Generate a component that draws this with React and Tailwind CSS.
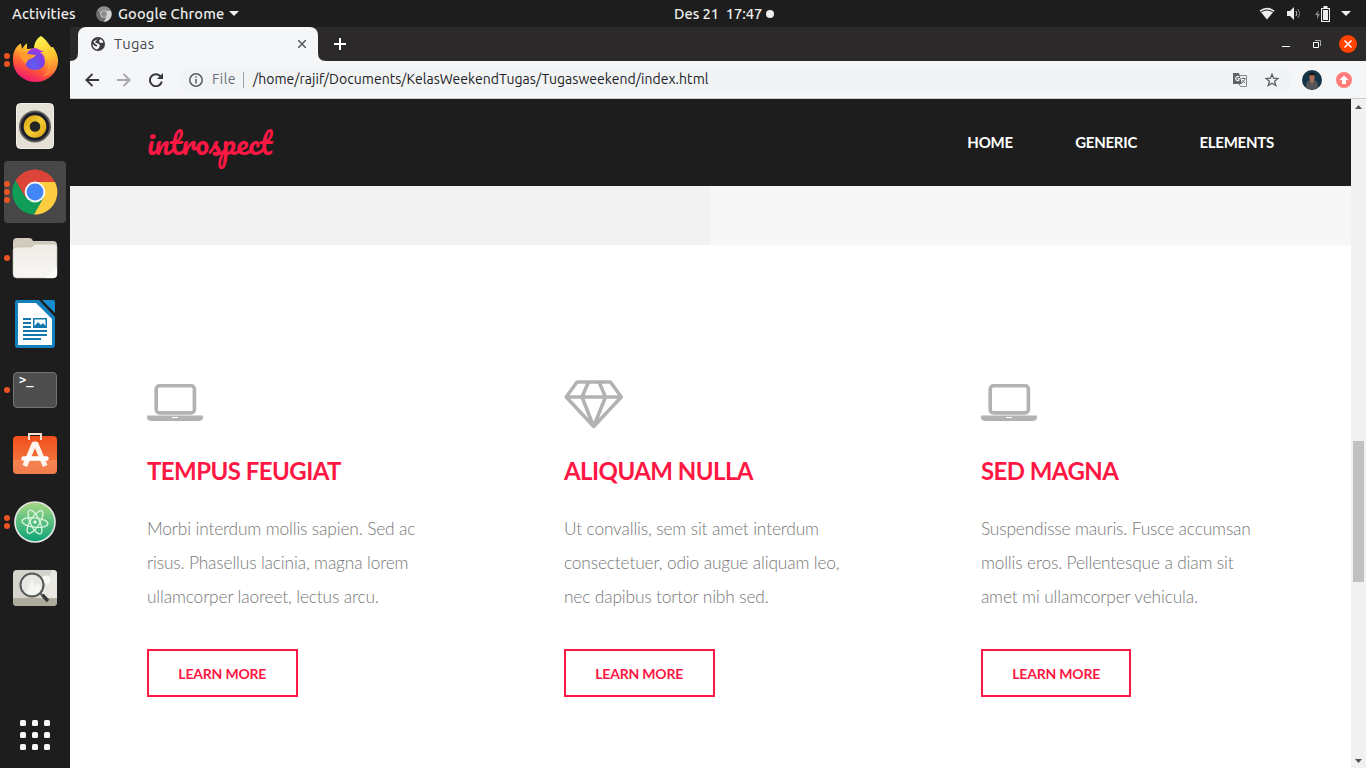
import React from 'react';

const UI = "font-['Ubuntu','Noto_Sans','Open_Sans',sans-serif]";

function Firefox() {
  return (
    <svg className="mb-[3px]" width="46" height="48" viewBox="0 0 46 48">
      <defs>
        <linearGradient id="ffBody" x1="0.8" y1="0" x2="0.3" y2="1">
          <stop offset="0" stopColor="#fff04a" />
          <stop offset="0.35" stopColor="#ffb52c" />
          <stop offset="0.65" stopColor="#ff5b36" />
          <stop offset="1" stopColor="#ee1179" />
        </linearGradient>
        <linearGradient id="ffTail" x1="0.3" y1="0" x2="0.6" y2="1">
          <stop offset="0" stopColor="#fff550" />
          <stop offset="0.6" stopColor="#ffc02f" />
          <stop offset="1" stopColor="#ff7139" />
        </linearGradient>
        <radialGradient id="ffGlobe" cx="0.4" cy="0.75" r="0.8">
          <stop offset="0" stopColor="#5f5ff0" />
          <stop offset="0.6" stopColor="#7542e5" />
          <stop offset="1" stopColor="#b833e1" />
        </radialGradient>
      </defs>
      <path d="M1 23C1 17 4 11 9 8.500L10 14C12 11 13 9.500 15 8.500V14C21 13 24 13 28 16L41 12C44 16 46 21 46 26A22.500 21 0 0 1 1 26Z" fill="url(#ffBody)" />
      <path d="M29 1C35 5 36 9 40 13C44 17 46 22 45 29C43 37 37 41 31 41C37 36 38 29 35 22C31 15 24 16 22 14C22 8 25 3 29 1Z" fill="url(#ffTail)" />
      <path d="M14 25C14 17 18 13 24 13L32 17C30 17 29 17 28 17C34 21 34 29 31 32C27 36 19 36 15 32C13 30 13 27 14 25Z" fill="url(#ffGlobe)" />
      <path d="M7 20C11 18 14 18 16 19L24 20C22 23 20 23 18 24C15 25 15 27 14 29C11 27 10 23 7 20Z" fill="#ff9a2e" />
    </svg>
  );
}

function Speaker() {
  return (
    <svg width="38" height="46" viewBox="0 0 38 46">
      <defs>
        <linearGradient id="cone" x1="0" y1="0" x2="1" y2="1">
          <stop offset="0" stopColor="#d79a10" />
          <stop offset="0.5" stopColor="#f5cf35" />
          <stop offset="1" stopColor="#d79a10" />
        </linearGradient>
      </defs>
      <rect x="0.500" y="0.500" width="37" height="45" rx="4" fill="#e4e0d6" stroke="#f3f1ec" />
      <circle cx="19" cy="23.500" r="16" fill="#62605d" />
      <circle cx="19" cy="23.500" r="14.300" fill="#1d1e2b" />
      <circle cx="19" cy="23.500" r="11.300" fill="url(#cone)" />
      <circle cx="19" cy="23.500" r="5.300" fill="#252525" />
    </svg>
  );
}

function ChromeLogo({ size, gray }) {
  const c = gray ? ['#8f8f8f', '#6f6f6f', '#d2d2d2', '#8c8c8c', '#dddddd'] : ['#db4437', '#0f9d58', '#ffcd40', '#4285f4', '#f5f5f5'];
  return (
    <svg width={size} height={size} viewBox="0 0 46 46">
      <path d="M3.500 11.500A22.500 22.500 0 0 1 43 13H23L13.500 28.500Z" fill={c[0]} />
      <path d="M3.500 11.500A22.500 22.500 0 0 0 22 45.500L32 28.500H13.500Z" fill={c[1]} />
      <path d="M43 13A22.500 22.500 0 0 1 22 45.500L32 28L23 13Z" fill={c[2]} />
      <circle cx="23" cy="23" r="10.400" fill={c[4]} />
      <circle cx="23" cy="23" r="8.400" fill={c[3]} />
    </svg>
  );
}

function Folder() {
  return (
    <svg width="46" height="42" viewBox="0 0 46 42">
      <defs>
        <linearGradient id="folder" x1="0" y1="0" x2="0" y2="1">
          <stop offset="0" stopColor="#eeece6" />
          <stop offset="1" stopColor="#f8f7f4" />
        </linearGradient>
      </defs>
      <path d="M1 5Q1 1 5 1H17Q20 1 21 4H41Q45 4 45 8V20H1Z" fill="#d1cabd" />
      <path d="M1 13Q1 10 5 10H18Q21 10 22 7H42Q45 7 45 10V37Q45 41 41 41H5Q1 41 1 37Z" fill="url(#folder)" stroke="#bdb7aa" strokeWidth="0.600" />
      <path d="M45 30V37Q45 41 41 41H33Q40 37 45 30Z" fill="#fcfcfa" />
    </svg>
  );
}

function Writer() {
  return (
    <svg width="42" height="48" viewBox="0 0 42 48">
      <path d="M3 0H25L41 17V45Q41 48 38 48H4Q1 48 1 45V2Q1 0 3 0Z" fill="#1480bd" />
      <path d="M28 0H39Q41 0 41 2V13Z" fill="#168bd0" />
      <path d="M4 3H22L38 19V45H4Z" fill="#ffffff" />
      <g fill="#1478ad">
        <path d="M9 18H17V20H9ZM9 22H17V24H9ZM9 26H17V28H9ZM9 30H33V32H9ZM9 34H33V36H9ZM9 38H27V40H9Z" />
        <path d="M19 18H33V28H19ZM20.500 19.500V26L24 22L27 25L29 23L31.500 26V19.500Z" fillRule="evenodd" />
      </g>
    </svg>
  );
}

function Terminal() {
  return (
    <div className="flex h-9 w-11 rounded border border-[#737373] bg-[#4e4e4e] pl-[5px] font-['DejaVu_Sans_Mono',monospace] text-[12px] leading-[15px] font-bold text-white">
      <span>&gt;_</span>
    </div>
  );
}

function Software() {
  return (
    <svg className="mb-[5px]" width="46" height="43" viewBox="0 0 46 43">
      <defs>
        <linearGradient id="bag" x1="0" y1="0" x2="0" y2="1">
          <stop offset="0" stopColor="#f04f1b" />
          <stop offset="0.620" stopColor="#f26f3a" />
          <stop offset="0.630" stopColor="#f58452" />
          <stop offset="1" stopColor="#f07b4c" />
        </linearGradient>
      </defs>
      <rect x="1" y="4" width="44" height="38" rx="4" fill="url(#bag)" />
      <path d="M17 8V2H29V8" fill="none" stroke="#f9dfcd" strokeWidth="2" />
      <path d="M12.800 34L22 12H24L33.200 34" fill="none" stroke="#fff5ee" strokeWidth="5" strokeLinejoin="round" />
      <path d="M11.500 26.500H34.500" stroke="#fff" strokeWidth="4.500" strokeLinecap="round" />
    </svg>
  );
}

function Atom() {
  return (
    <svg width="42" height="42" viewBox="0 0 42 42">
      <defs>
        <linearGradient id="atom" x1="0" y1="0" x2="0" y2="1">
          <stop offset="0" stopColor="#a9d887" />
          <stop offset="1" stopColor="#0aa378" />
        </linearGradient>
      </defs>
      <circle cx="21" cy="21" r="20" fill="url(#atom)" stroke="#e4e6e2" strokeWidth="1.700" />
      <g fill="none" stroke="#dcf7df" strokeWidth="1.300">
        <ellipse cx="21" cy="21.500" rx="13" ry="4.700" transform="rotate(6 21 21)" />
        <ellipse cx="21" cy="21" rx="13" ry="4.700" transform="rotate(65 21 21)" />
        <ellipse cx="21" cy="21" rx="13" ry="4.700" transform="rotate(122 21 21)" />
      </g>
      <circle cx="21" cy="21" r="1.600" fill="#fff" />
    </svg>
  );
}

function Viewer() {
  return (
    <svg width="46" height="38" viewBox="0 0 46 38">
      <rect x="1" y="1" width="44" height="36" rx="4" fill="#d5d4cc" />
      <path d="M41 1Q45 1 45 5V29H28L40 1Z" fill="#e8e7e1" />
      <path d="M1 29H45V33Q45 37 41 37H5Q1 37 1 33Z" fill="#aeaa9c" />
      <circle cx="34" cy="11" r="4.500" fill="#f7f7f5" />
      <circle cx="20" cy="16" r="11.500" fill="#e9e9e6" fillOpacity="0.900" stroke="#565656" strokeWidth="2" />
      <path d="M14 24L20 10L23 17L26 14L29 18Q27 26 20 26Z" fill="#fff" fillOpacity="0.600" />
      <path d="M28 24L31 27" stroke="#555" strokeWidth="2" />
      <path d="M30.500 26L36 32" stroke="#373737" strokeWidth="3.400" />
    </svg>
  );
}

const dock = [
  { icon: <Firefox />, dots: 2 },
  { icon: <Speaker />, dots: 0 },
  { icon: <ChromeLogo size={46} />, dots: 3, active: true },
  { icon: <Folder />, dots: 1 },
  { icon: <Writer />, dots: 0 },
  { icon: <Terminal />, dots: 1 },
  { icon: <Software />, dots: 0 },
  { icon: <Atom />, dots: 2 },
  { icon: <Viewer />, dots: 0 },
];

function Dock() {
  return (
    <aside className="flex w-[70px] shrink-0 flex-col justify-between bg-[#1d1d1d] pt-[2px]">
      <div className="flex flex-col gap-1 px-1">
        {dock.map((item, i) => (
          <div key={i} className={'relative flex h-[62px] items-center justify-center rounded ' + (item.active ? 'bg-[#474747]' : '')}>
            <div className="absolute left-0 flex flex-col gap-[2px]">
              {Array.from({ length: item.dots }, (_, d) => (
                <span key={d} className="size-[6px] rounded-full bg-[#e95420]" />
              ))}
            </div>
            {item.icon}
          </div>
        ))}
      </div>
      <div className="grid grid-cols-3 gap-[6px] self-center pb-[18px]">
        {Array.from({ length: 9 }, (_, i) => (
          <span key={i} className="size-[6px] rounded-[1.5px] bg-[#f7f7f7]" />
        ))}
      </div>
    </aside>
  );
}

function TopBar() {
  return (
    <div className={'flex h-[27px] shrink-0 items-center bg-[#1d1d1d] text-[14.67px] leading-[27px] font-medium text-[#eeeeec] ' + UI}>
      <div className="flex w-[674px] items-center pl-3">
        <span className="w-[84px] tracking-[0.15px] whitespace-nowrap">Activities</span>
        <ChromeLogo size={16} gray />
        <span className="ml-[6px] w-[111px] tracking-[0.15px] whitespace-nowrap">Google Chrome</span>
        <svg width="10" height="5" viewBox="0 0 10 5"><path d="M0 0H10L5 5Z" fill="#eeeeec" /></svg>
      </div>
      <div className="flex items-center gap-1">
        <span className="w-[88px] tracking-[-0.05px] whitespace-pre">Des 21  17:47</span>
        <span className="size-2 rounded-full bg-[#eeeeec]" />
      </div>
      <div className="flex flex-1 items-center justify-end pr-[15px]">
        <svg width="16" height="13" viewBox="0 0 16 13">
          <path d="M0.500 3.500Q8-2 15.500 3.500L8 12.500Z" fill="#eee" />
          <path d="M2 5Q8 1 14 5" fill="none" stroke="#1d1d1d" strokeWidth="1" />
        </svg>
        <svg className="ml-[12px]" width="15" height="14" viewBox="0 0 15 14">
          <path d="M0 4H3L7 0V13L3 9H0Z" fill="#eee" />
          <path d="M9 4Q10.500 6.500 9 9" fill="none" stroke="#ccc" />
          <path d="M10.500 2Q14.500 6.500 10.500 11" fill="none" stroke="#888" />
        </svg>
        <svg className="ml-[13px]" width="15" height="16" viewBox="0 0 15 16">
          <path d="M3.500 4L0 9H2V13L5 8H3Z" fill="#888" />
          <path d="M8.500 0H12.500V2H15V16H6V2H8.500Z" fill="#eee" />
          <path d="M7.500 3.500H13.500V14.500H7.500Z" fill="#eee" stroke="#1d1d1d" />
        </svg>
        <svg className="ml-[11px]" width="10" height="5" viewBox="0 0 10 5"><path d="M0 0H10L5 5Z" fill="#eee" /></svg>
      </div>
    </div>
  );
}

function TabStrip() {
  return (
    <div className={'flex h-[34px] shrink-0 bg-[#2c292a] ' + UI}>
      <div className="flex w-2 items-end">
        <svg width="8" height="8"><path d="M8 0V8H0Q8 8 8 0Z" fill="#f5f6f8" /></svg>
      </div>
      <div className="flex w-[240px] items-center rounded-t-lg bg-[#f5f6f8] px-3 text-[14.67px] text-[#45494d]">
        <svg className="ml-[1px]" width="14" height="14" viewBox="0 0 14 14">
          <circle cx="7" cy="7" r="7" fill="#3b3c3e" />
          <path d="M7.500 1.500C5 2 6.500 3.500 5 4L4 5.500L7 6.500L9 8L8 11L6 12.500C3 12 1.500 9.500 1.500 7L4 9L6 9.500L6 8L3.500 6.500L2.500 4.500M9.500 2L8 4L9 6L12.500 5.500Q12 3 9.500 2Z" fill="#f5f6f8" />
        </svg>
        <span className="ml-[9px] flex-1 tracking-[0.4px]">Tugas</span>
        <svg width="8" height="8" viewBox="0 0 8 8"><path d="M0 0L8 8M8 0L0 8" stroke="#55585c" strokeWidth="1.500" /></svg>
      </div>
      <div className="flex w-2 items-end">
        <svg width="8" height="8"><path d="M0 0V8H8Q0 8 0 0Z" fill="#f5f6f8" /></svg>
      </div>
      <div className="flex flex-1 items-center pl-2">
        <svg width="12" height="12" viewBox="0 0 12 12"><path d="M6 0V12M0 6H12" stroke="#fff" strokeWidth="2" /></svg>
      </div>
      <div className="flex items-center pr-[9px]">
        <span className="mt-[5px] h-px w-2 bg-white" />
        <svg className="ml-[23px]" width="8" height="8" viewBox="0 0 8 8"><path d="M0.500 2.500H5.500V7.500H0.500Z" fill="none" stroke="#fff" /><path d="M2 0.500H7.500V6" fill="none" stroke="#aaa" /></svg>
        <svg className="ml-[18px]" width="18" height="18" viewBox="0 0 18 18"><circle cx="9" cy="9" r="9" fill="#ff4200" /><path d="M5.500 5.500L12.500 12.500M12.500 5.500L5.500 12.500" stroke="#fff" strokeWidth="1.500" /></svg>
      </div>
    </div>
  );
}

function Toolbar() {
  return (
    <div className={'flex h-[38px] shrink-0 items-center border-b border-[#c3cdd3] bg-[#f5f6f8] pr-[14px] pl-[15px] text-[14px] ' + UI}>
      <svg width="14" height="14" viewBox="0 0 14 14"><path d="M14 7H1.500M7.500 1L1.300 7L7.500 13" fill="none" stroke="#38393c" strokeWidth="1.800" /></svg>
      <svg className="ml-[18px]" width="14" height="14" viewBox="0 0 14 14"><path d="M0 7H12.500M6.500 1L12.700 7L6.500 13" fill="none" stroke="#a5a7aa" strokeWidth="1.800" /></svg>
      <svg className="ml-[18px]" width="14" height="14" viewBox="0 0 14 14"><path d="M12 4A6 6 0 1 0 12.800 8.500" fill="none" stroke="#38393c" strokeWidth="2" /><path d="M14 0V6H8Z" fill="#38393c" /></svg>
      <div className="ml-[15px] flex h-7 flex-1 items-center rounded-full bg-[#f1f3f5] pr-[12px] pl-[11px]">
        <svg width="14" height="14" viewBox="0 0 14 14"><circle cx="7" cy="7" r="6.200" fill="none" stroke="#5a5e63" strokeWidth="1.500" /><path d="M7 6V10.500M7 3.200V4.800" stroke="#5a5e63" strokeWidth="1.500" /></svg>
        <span className="ml-[9px] w-[31px] tracking-[0.45px] text-[#66717b]">File</span>
        <span className="h-4 w-px bg-[#9ba0a5]" />
        <span className="ml-[9px] flex-1 tracking-[0.04px] whitespace-nowrap text-[#202124]">/home/rajif/Documents/KelasWeekendTugas/Tugasweekend/index.html</span>
        <svg width="14" height="14" viewBox="0 0 14 14">
          <path d="M5.500 2.500H13.500V13.500H7.500L6 11" fill="none" stroke="#80858a" />
          <path d="M0 0H6L9 11H0Z" fill="#5f6368" />
          <path d="M6 4A2 2 0 1 0 6 7V5.500H4.500" fill="none" stroke="#f1f3f5" strokeWidth="1.200" />
          <path d="M8.500 5.500H12.500M10.500 4.500V5.500M12 6L9 10M9.500 7L12 10" stroke="#6f7479" />
        </svg>
        <svg className="ml-[18px]" width="14" height="14" viewBox="0 0 14 14"><path d="M7 1.300L8.600 5.200L12.900 5.500L9.600 8.300L10.700 12.500L7 10.200L3.300 12.500L4.400 8.300L1.100 5.500L5.400 5.200Z" fill="none" stroke="#5f6368" strokeWidth="1.400" /></svg>
      </div>
      <svg className="ml-[11px]" width="20" height="20" viewBox="0 0 20 20">
        <circle cx="10" cy="10" r="10" fill="#153446" />
        <path d="M4.500 18Q3 11 8 10H12Q17 11 15.500 18Q10 21 4.500 18Z" fill="#55565a" />
        <ellipse cx="10" cy="7" rx="2.800" ry="3.800" fill="#a46b50" />
        <path d="M7 6Q7 2.500 10 2.500Q13 2.500 13 6Q10 4 7 6Z" fill="#171719" />
        <path d="M8 10L10 14L12 10Z" fill="#ad7350" />
      </svg>
      <svg className="ml-[14px]" width="16" height="16" viewBox="0 0 16 16"><circle cx="8" cy="8" r="8" fill="#ff7c78" /><path d="M8 3.500L12.500 8H10V12H6V8H3.500Z" fill="#fff" /></svg>
    </div>
  );
}

function Laptop() {
  return (
    <svg width="56" height="38" viewBox="0 0 56 38">
      <rect x="9.200" y="1.700" width="38.200" height="27.200" rx="3.300" fill="none" stroke="#b2b2b2" strokeWidth="3.600" />
      <path d="M0 31.500H56V33.500Q56 37 51 37H5Q0 37 0 33.500ZM25 33V34H31V33Z" fill="#b2b2b2" fillRule="evenodd" />
    </svg>
  );
}

function Diamond() {
  return (
    <svg className="mt-[2px]" width="60" height="49" viewBox="0 0 60 49">
      <path d="M13 2H46.500L57.300 17L29.700 46.500L2.200 17ZM2.200 17H57.300M24.500 2L18 17L29.700 46.500L41.500 17L35 2" fill="none" stroke="#b2b2b2" strokeWidth="3.500" strokeLinejoin="round" />
    </svg>
  );
}

const features = [
  { icon: <Laptop />, title: 'TEMPUS FEUGIAT', lines: ['Morbi interdum mollis sapien. Sed ac', 'risus. Phasellus lacinia, magna lorem', 'ullamcorper laoreet, lectus arcu.'] },
  { icon: <Diamond />, title: 'ALIQUAM NULLA', lines: ['Ut convallis, sem sit amet interdum', 'consectetuer, odio augue aliquam leo,', 'nec dapibus tortor nibh sed.'] },
  { icon: <Laptop />, title: 'SED MAGNA', lines: ['Suspendisse mauris. Fusce accumsan', 'mollis eros. Pellentesque a diam sit', 'amet mi ullamcorper vehicula.'] },
];

function Page() {
  return (
    <div className="flex flex-1 flex-col bg-white font-['Lato',sans-serif]">
      <header className="flex h-[87px] shrink-0 items-center justify-between bg-[#1d1d1d] px-[77px]">
        <a className="font-['Pacifico','Lato',cursive] text-[30.33px] leading-none font-normal text-[#ff1744]">introspect</a>
        <nav className="flex gap-[62.3px] text-[15px] font-bold tracking-[-0.25px] text-white">
          <a>HOME</a>
          <a>GENERIC</a>
          <a>ELEMENTS</a>
        </nav>
      </header>
      <div className="flex h-[59px] shrink-0">
        <div className="w-[640px] bg-[#f2f2f2]" />
        <div className="flex-1 bg-[#f7f7f7]" />
      </div>
      <main className="grid grid-cols-[416.95px_416.95px_1fr] pt-[134px] pl-[77px]">
        {features.map((f) => (
          <section key={f.title} className="flex flex-col items-start">
            <div className="flex h-12 items-center">{f.icon}</div>
            <h2 className="mt-[27px] text-[24px] leading-[34px] font-bold tracking-[-0.55px] text-[#ff1744]">{f.title}</h2>
            <p className="mt-[24px] text-[17.33px] leading-[34px] font-light tracking-[-0.15px] text-[#777777]">
              {f.lines.map((l) => (
                <span key={l} className="block whitespace-nowrap">{l}</span>
              ))}
            </p>
            <button className="mt-[35px] h-12 w-[150.58px] border-2 border-[#ff1744] text-[14px] font-bold tracking-[-0.2px] text-[#ff1744]">LEARN MORE</button>
          </section>
        ))}
      </main>
    </div>
  );
}

function Scrollbar() {
  return (
    <div className="flex w-[15px] shrink-0 flex-col items-center bg-[#f1f1f1] pt-[6px] pb-[5px]">
      <svg width="7" height="4" viewBox="0 0 7 4"><path d="M0 4L3.500 0L7 4Z" fill="#505050" /></svg>
      <div className="mt-[332px] h-[141px] w-[11px] bg-[#c1c1c1]" />
      <svg className="mt-auto" width="7" height="4" viewBox="0 0 7 4"><path d="M0 0L3.500 4L7 0Z" fill="#505050" /></svg>
    </div>
  );
}

export default function App() {
  return (
    <div className="flex h-[768px] w-[1366px] flex-col overflow-hidden">
      <TopBar />
      <div className="flex min-h-0 flex-1">
        <Dock />
        <div className="flex min-w-0 flex-1 flex-col">
          <TabStrip />
          <Toolbar />
          <div className="flex min-h-0 flex-1">
            <Page />
            <Scrollbar />
          </div>
        </div>
      </div>
    </div>
  );
}
